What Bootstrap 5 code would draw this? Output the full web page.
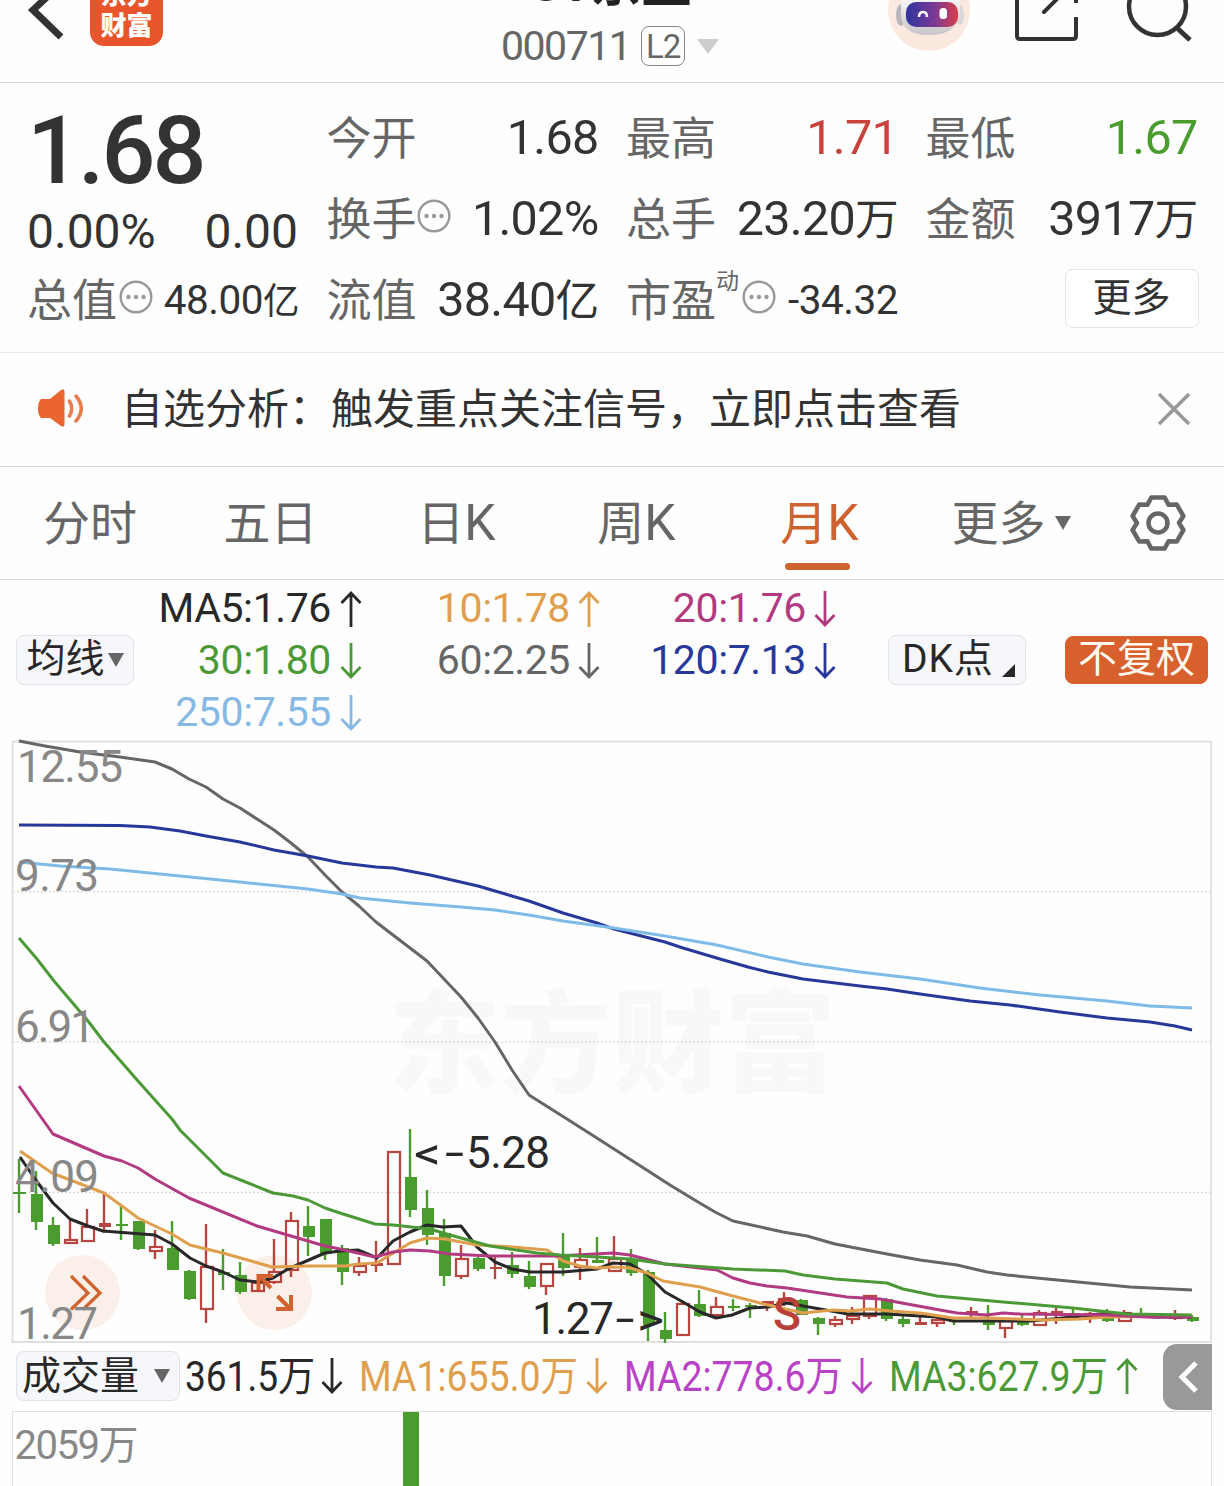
<!DOCTYPE html>
<html lang="zh-CN">
<head>
<meta charset="utf-8">
<meta name="viewport" content="width=device-width, initial-scale=1">
<title>ST京蓝 000711</title>
<link href="https://cdn.jsdelivr.net/npm/bootstrap@5.3.0/dist/css/bootstrap.min.css" rel="stylesheet">
<style>
body{font-family:Roboto,"Noto Sans CJK SC",sans-serif;background:#fefefe;color:#333;width:1224px;height:1486px;overflow:hidden;line-height:1}
svg{display:block;flex:none}
svg text{font-family:Roboto,"Noto Sans CJK SC",sans-serif}
#kline{overflow:visible}
.topbar{height:83px;border-bottom:1px solid #d6d6d6;overflow:hidden}
.applogo{width:73px;height:76px;margin:-30px 0 0 25px;border-radius:14px;background:#e8552b;color:#fff;font-weight:900;font-size:26px;line-height:31px;padding-top:10px;text-align:center}
.stockblock{margin-left:338px}
.stockname{font-size:50px;font-weight:700;color:#222;line-height:50px;margin-top:-41px;white-space:nowrap;text-align:center;width:200px}
.codeline{height:40px;margin-top:17px}
.stockcode{font-size:41px;letter-spacing:-1.5px;color:#666}
.lvtag{width:44px;height:40px;margin-left:11px;border:1.5px solid #888;border-radius:8px;font-size:33px;letter-spacing:-1px;color:#666}
.quote{height:270px;border-bottom:1px solid #e9e9e9;padding:15px 0 0 27px}
.quotegrid{display:grid;grid-template-columns:271px 271px 271px 271px;column-gap:28.5px;grid-template-rows:81px 81px 81px}
.pricecell{grid-row:span 2}
.bigprice{font-size:95px;font-weight:500;letter-spacing:-3px;line-height:95px;margin:5px 0 0 0}
.pct{font-size:48px;margin-top:9px;line-height:50px}
.qcell{height:81px}
.lab{font-size:45px;color:#666;padding-top:1px}
.val{font-size:48.5px;letter-spacing:-.7px;margin-right:-1px}
.vsm{font-size:40.5px;letter-spacing:-.5px}
.up{color:#c9423b}.down{color:#4a9c2e}
.cj{font-size:.9em}
.supmark{font-size:23px;color:#666;margin-bottom:38px}
.morebtn{width:134px;height:59px;border:1.5px solid #e3e4e6;border-radius:7px;font-size:39px;background:#fff;margin:-5px -2px 0 auto}
.notice{height:114px;border-bottom:1px solid #d8d8d8;font-size:42px;padding-left:37px}
.periods{display:grid;grid-template-columns:180px 181px 190px 170px 196px 188px 105px;height:113px;border-bottom:1px solid #d8d8d8;font-size:47px;color:#666}
.periods .kk{font-size:50px;margin-right:-1px}
.period{position:relative}
.period.on{color:#cf6330}
.period.on::after{content:"";position:absolute;left:50%;margin-left:-34px;top:96px;width:65px;height:7px;border-radius:4px;background:#cf6330}
.legend{height:161px;padding-left:16px}
.chip{height:50px;border:1.5px solid #e0e3e8;border-radius:8px;background:#f6f7fa;color:#282828;font-size:39px;margin-top:-2px}
.chip.solid{background:#d8602c;border-color:#d8602c;color:#fffaf0;height:48px}
.magrid{display:grid;grid-template-columns:229px 237px 236px;grid-auto-rows:52px;height:156px;font-size:41px;letter-spacing:-.4px}
.volrow{height:68px;padding-left:16px}
.foldtab{width:49px;height:66px;border-radius:14px 0 0 14px;background:#999}
.volpane{height:75px;margin:0 12px;border:1.5px solid #e0e0e0;border-bottom:0}
</style>
</head>
<body>
<svg width="0" height="0" class="position-absolute">
  <symbol id="aup" viewBox="0 0 22 36"><path d="M11 36V2M1.500 12 11 2l9.500 10" fill="none" stroke="currentColor" stroke-width="2.800"/></symbol>
  <symbol id="adn" viewBox="0 0 22 36"><path d="M11 0v34M1.500 24 11 34l9.500-10" fill="none" stroke="currentColor" stroke-width="2.800"/></symbol>
  <symbol id="dots" viewBox="0 0 34 34"><circle cx="17" cy="17" r="15.300" fill="none" stroke="#999" stroke-width="2.400"/><g fill="#999"><circle cx="9.500" cy="17" r="2.200"/><circle cx="17" cy="17" r="2.200"/><circle cx="24.500" cy="17" r="2.200"/></g></symbol>
</svg>

<header class="topbar d-flex align-items-start">
  <svg width="65" height="50" viewBox="0 0 65 50"><path d="M61-16 33 10l28 27" fill="none" stroke="#333" stroke-width="7"/></svg>
  <div class="applogo">东方<br>财富</div>
  <div class="stockblock d-flex flex-column align-items-center">
    <div class="stockname">ST京蓝</div>
    <div class="codeline d-flex align-items-center">
      <span class="stockcode">000711</span>
      <span class="lvtag d-flex align-items-center justify-content-center">L2</span>
      <svg width="24" height="16" viewBox="0 0 24 16" style="margin-left:11px"><path d="M1 1h22L12 16z" fill="#ccc"/></svg>
    </div>
  </div>
  <svg class="ms-auto" width="336" height="60" viewBox="888 0 336 60">
    <defs>
      <linearGradient id="face"><stop offset="0" stop-color="#2f35a0"/><stop offset=".55" stop-color="#7a3a94"/><stop offset="1" stop-color="#d8404a"/></linearGradient>
      <linearGradient id="helm" x2="0" y2="1"><stop offset="0" stop-color="#fff"/><stop offset="1" stop-color="#c9c5ca"/></linearGradient>
    </defs>
    <circle cx="929" cy="10" r="41" fill="#fbe9df"/>
    <ellipse cx="901" cy="15" rx="5" ry="11" fill="#b9b6bb"/><ellipse cx="960" cy="15" rx="4" ry="10" fill="#d9d6da"/>
    <path d="M901-8h59v22q-3 21-31 21t-28-21z" fill="url(#helm)"/>
    <rect x="906" y="2" width="52" height="25" rx="10" fill="url(#face)"/>
    <path d="M919 17q0-5 4-5t4 5" fill="none" stroke="#fff" stroke-width="2.500"/><rect x="939.500" y="8" width="7.500" height="11" rx="3.500" fill="#fff"/>
    <g fill="none" stroke="#333" stroke-width="4">
      <path d="M1017-6v42q0 3 3 3h53q3 0 3-3V17M1076-6v9"/><path d="m1044 12 22-22" stroke-linecap="round"/>
      <circle cx="1157.500" cy="6.500" r="28.500" stroke-width="4.500"/><path d="m1176 27 14 13" stroke-width="5"/>
    </g>
  </svg>
</header>

<section class="quote">
  <div class="quotegrid">
    <div class="pricecell"><div class="bigprice">1.68</div><div class="pct d-flex justify-content-between"><span>0.00%</span><span>0.00</span></div></div>
    <div class="qcell d-flex align-items-center justify-content-between"><span class="lab">今开</span><span class="val">1.68</span></div>
    <div class="qcell d-flex align-items-center justify-content-between"><span class="lab">最高</span><span class="val up">1.71</span></div>
    <div class="qcell d-flex align-items-center justify-content-between"><span class="lab">最低</span><span class="val down">1.67</span></div>
    <div class="qcell d-flex align-items-center"><span class="lab">换手</span><svg width="34" height="34" class="mb-2 ms-0"><use href="#dots"/></svg><span class="val ms-auto">1.02%</span></div>
    <div class="qcell d-flex align-items-center justify-content-between"><span class="lab">总手</span><span class="val">23.20<span class="cj">万</span></span></div>
    <div class="qcell d-flex align-items-center justify-content-between"><span class="lab">金额</span><span class="val">3917<span class="cj">万</span></span></div>
    <div class="qcell d-flex align-items-center"><span class="lab">总值</span><svg width="34" height="34" class="mb-2" style="margin-left:2px"><use href="#dots"/></svg><span class="val vsm ms-auto">48.00<span class="cj">亿</span></span></div>
    <div class="qcell d-flex align-items-center justify-content-between"><span class="lab">流值</span><span class="val">38.40<span class="cj">亿</span></span></div>
    <div class="qcell d-flex align-items-center"><span class="lab">市盈</span><span class="supmark">动</span><svg width="34" height="34" class="mb-2" style="margin-left:3px"><use href="#dots"/></svg><span class="val vsm ms-auto">-34.32</span></div>
    <div class="qcell d-flex align-items-center"><div class="morebtn d-flex align-items-center justify-content-center">更多</div></div>
  </div>
</section>

<section class="notice d-flex align-items-center">
  <svg width="48" height="38" viewBox="0 0 48 38" style="margin-bottom:3px"><path d="M4 10h9L24 1q3-2 3.500 1v34q-.5 3-3.500 1L13 29H4q-3-3-3-9.500T4 10z" fill="#ea6530"/><path d="M32.500 12q4.500 7.500 0 15M39 7q10.500 12.500 0 25" fill="none" stroke="#ea7c4c" stroke-width="3.500" stroke-linecap="round"/></svg>
  <span style="margin-left:36px">自选分析：触发重点关注信号，立即点击查看</span>
  <svg class="ms-auto" style="margin:0 33px 2px 0" width="34" height="34" viewBox="0 0 34 34"><path d="m2 2 30 30M32 2 2 32" stroke="#999" stroke-width="3.500"/></svg>
</section>

<nav class="periods">
  <div class="period d-flex align-items-center justify-content-center">分时</div>
  <div class="period d-flex align-items-center justify-content-center">五日</div>
  <div class="period d-flex align-items-center justify-content-center">日<span class="kk">K</span></div>
  <div class="period d-flex align-items-center justify-content-center">周<span class="kk">K</span></div>
  <div class="period on d-flex align-items-center justify-content-center">月<span class="kk">K</span></div>
  <div class="period d-flex align-items-center justify-content-center">更多<svg width="16" height="14" viewBox="0 0 16 14" style="margin-left:9px"><path d="M0 0h16L8 14z" fill="#666"/></svg></div>
  <div class="d-flex align-items-center justify-content-center"><svg width="60" height="60" viewBox="-30 -30 60 60"><g fill="none" stroke="#666" stroke-width="4.500" stroke-linejoin="round"><path d="M-6.700-25.500H6.700L10.500-18.200 18.700-18.600 25.400-7 21 0 25.400 7 18.700 18.600 10.500 18.200 6.700 25.500H-6.700L-10.500 18.200-18.700 18.600-25.400 7-21 0-25.400-7-18.700-18.600-10.500-18.200z"/><circle r="9.500"/></g></svg></div>
</nav>

<section class="legend d-flex align-items-center">
  <div class="chip d-flex align-items-center justify-content-center" style="width:118px">均线<svg width="16" height="14" viewBox="0 0 16 14" style="margin-left:3px"><path d="M0 0h16L8 14z" fill="#666"/></svg></div>
  <div class="magrid">
    <div class="d-flex align-items-center justify-content-end" style="color:#282828">MA5:1.76<svg width="22" height="36" style="margin:0 1px 0 9px"><use href="#aup"/></svg></div>
    <div class="d-flex align-items-center justify-content-end" style="color:#e09f4d">10:1.78<svg width="22" height="36" class="ms-2"><use href="#aup"/></svg></div>
    <div class="d-flex align-items-center justify-content-end" style="color:#b23a80">20:1.76<svg width="22" height="36" class="ms-2"><use href="#adn"/></svg></div>
    <div class="d-flex align-items-center justify-content-end" style="color:#4c9a37">30:1.80<svg width="22" height="36" style="margin:0 1px 0 9px"><use href="#adn"/></svg></div>
    <div class="d-flex align-items-center justify-content-end" style="color:#666">60:2.25<svg width="22" height="36" class="ms-2"><use href="#adn"/></svg></div>
    <div class="d-flex align-items-center justify-content-end" style="color:#27389a">120:7.13<svg width="22" height="36" class="ms-2"><use href="#adn"/></svg></div>
    <div class="d-flex align-items-center justify-content-end" style="color:#86b9e4">250:7.55<svg width="22" height="36" style="margin:0 1px 0 9px"><use href="#adn"/></svg></div>
  </div>
  <div class="chip d-flex align-items-center" style="width:138px;margin-left:52px;padding-left:13px"><span style="letter-spacing:.8px">DK点</span><svg width="13" height="13" viewBox="0 0 13 13" style="margin:22px 0 0 9px"><path d="M13 0v13H0z" fill="#282828"/></svg></div>
  <div class="chip solid d-flex align-items-center justify-content-center" style="width:143px;margin-left:39px">不复权</div>
</section>

<svg id="kline" width="1224" height="602" viewBox="0 741 1224 602">
  <text x="388" y="1084" textLength="448" lengthAdjust="spacingAndGlyphs" font-size="112" style="font-weight:900" fill="#f8f8f8">东方财富</text>
  <g stroke="#cfcfcf" stroke-width="1.300" stroke-dasharray="1.500 2.500"><path d="M13 891.500H1210M13 1042H1210M13 1192.500H1210"/></g>
  <path d="M12.500 741.500H1211V1342H12.500z" fill="none" stroke="#e0e0e0" stroke-width="1.800"/>
  <g fill="#fbf0e9"><circle cx="82.500" cy="1292.500" r="37.500"/><circle cx="274.500" cy="1292.500" r="37.500"/></g>
  <g id="candles"></g>
  <g fill="none" stroke-width="3" stroke-linejoin="round">
    <polyline stroke="#282828" points="20,1157 35,1179 53,1203 70,1219 88,1226 103,1231 155,1235 172,1244 190,1258 206,1266 223,1272 240,1280 258,1282 273,1278 288,1269 325,1253 340,1251 358,1250 377,1258 393,1241 410,1232 427,1225 443,1227 461,1226 477,1247 495,1262 512,1269 530,1272 563,1272 597,1269 613,1263 630,1264 647,1274 665,1292 683,1302 700,1312 716,1318 732,1315 750,1308 768,1307 787,1303 803,1306 820,1309 848,1314 887,1314 920,1316 937,1317 953,1321 1030,1321 1053,1319 1100,1314 1127,1314 1153,1317 1192,1317"/>
    <polyline stroke="#e09f4d" points="20,1151 52,1173 104,1193 122,1206 138,1218 172,1234 190,1245 206,1249 223,1253 272,1267 307,1266 345,1266 358,1264 377,1263 390,1255 410,1243 427,1238 445,1239 477,1245 513,1247 547,1250 563,1261 580,1266 597,1268 613,1267 630,1268 647,1273 663,1281 700,1287 733,1296 768,1305 803,1313 833,1310 850,1311 870,1309 890,1311 920,1313 953,1318 987,1318 1043,1320 1080,1319 1107,1317 1192,1316"/>
    <polyline stroke="#b23a80" points="19,1086 36,1110 53,1134 104,1156 122,1161 138,1168 155,1179 189,1198 257,1226 325,1246 340,1249 375,1257 393,1252 410,1250 430,1251 450,1254 490,1256 557,1256 613,1253 630,1255 665,1264 717,1270 733,1278 750,1283 767,1286 787,1288 847,1297 880,1299 940,1310 957,1313 987,1315 1003,1313 1020,1314 1107,1315 1147,1317 1192,1317"/>
    <polyline stroke="#4c9a37" points="19,938 37,959 54,981 71,1001 88,1021 104,1042 138,1081 172,1119 180,1130 223,1173 273,1193 293,1196 308,1200 325,1208 340,1213 375,1224 393,1225 430,1229 450,1235 490,1246 537,1253 560,1255 597,1257 630,1259 665,1264 733,1269 785,1271 803,1275 835,1279 887,1283 903,1289 937,1296 1003,1302 1073,1308 1127,1314 1192,1315"/>
    <polyline stroke="#666" points="19,741 45,746 80,752 120,757 155,762 172,769 189,779 206,787 223,799 240,808 257,819 274,830 291,843 308,857 325,875 342,892 359,906 376,922 393,935 410,948 427,961 444,979 461,997 478,1018 495,1042 512,1070 529,1095 548,1107 567,1119 600,1140 670,1185 693,1199 715,1212 733,1221 783,1232 807,1236 835,1244 887,1254 920,1260 957,1265 987,1272 1007,1275 1047,1279 1130,1287 1192,1290"/>
    <polyline stroke="#27389a" points="19,825 120,825.500 150,827 180,831 206,836 240,842 274,850 308,856 342,863 376,867 393,868 430,875 478,886 529,901 563,913 597,923 614,929 665,942 683,948 720,959 748,967 768,972 803,979 860,986 887,989 920,994 970,1001 1010,1005 1060,1012 1107,1018 1150,1022 1175,1026 1192,1030"/>
    <polyline stroke="#7fbbe8" points="19,862 60,866 110,869 160,874 240,882 308,889 342,894 360,898 410,903 461,907 495,910 529,915 563,921 614,928 665,936 717,945 768,957 803,964 860,972 920,979 980,988 1040,995 1107,1001 1150,1006 1192,1008"/>
  </g>
  <g fill="none" stroke="#d2622f" stroke-width="3.200"><path d="m71 1276 17 17-17 16.500M83 1276l17 17-17 16.500"/><path stroke-width="4" d="M258.500 1290v-14H273M259 1276l12 12M277.500 1296l13 13M276 1309h15v-14"/></g>
  <g fill="#888" font-size="44">
    <text x="17" y="782" textLength="106">12.55</text><text x="15" y="891" textLength="84">9.73</text><text x="15" y="1042" textLength="80">6.91</text><text x="15" y="1192" textLength="84">4.09</text><text x="17" y="1339" textLength="81">1.27</text>
  </g>
  <g fill="#282828" font-size="44">
    <text x="414" y="1169" textLength="27" lengthAdjust="spacingAndGlyphs">&lt;</text><text x="445" y="1168" textLength="19" lengthAdjust="spacingAndGlyphs">-</text><text x="466" y="1168" textLength="84">5.28</text>
    <text x="532" y="1334" textLength="82">1.27</text><text x="615.500" y="1334" textLength="19" lengthAdjust="spacingAndGlyphs">-</text><text x="637" y="1335" textLength="27" lengthAdjust="spacingAndGlyphs">&gt;</text>
  </g>
  <text x="773" y="1330" font-size="46" textLength="28" lengthAdjust="spacingAndGlyphs" fill="#b9403a" style="font-weight:500">S</text>
</svg>

<section class="volrow d-flex align-items-center">
  <div class="chip d-flex align-items-center justify-content-between" style="width:164px;padding:0 9px 0 5px">成交量<svg width="16" height="14" viewBox="0 0 16 14"><path d="M0 0h16L8 14z" fill="#666"/></svg></div>
  <div class="d-flex" style="margin:-2px 0 0 5px;gap:16px">
    <svg width="160" height="44" viewBox="0 0 160 44" fill="#282828" color="#282828"><text x="0" y="37" font-size="42" textLength="130" lengthAdjust="spacingAndGlyphs">361.5万</text><use href="#adn" x="136" y="4" width="22" height="36"/></svg>
    <svg width="249" height="44" viewBox="0 0 249 44" fill="#e09f4d" color="#e09f4d"><text x="-2" y="37" font-size="42" textLength="219" lengthAdjust="spacingAndGlyphs">MA1:655.0万</text><use href="#adn" x="225" y="4" width="22" height="36"/></svg>
    <svg width="249" height="44" viewBox="0 0 249 44" fill="#b943c6" color="#b943c6"><text x="-2" y="37" font-size="42" textLength="219" lengthAdjust="spacingAndGlyphs">MA2:778.6万</text><use href="#adn" x="225" y="4" width="22" height="36"/></svg>
    <svg width="249" height="44" viewBox="0 0 249 44" fill="#4c9a37" color="#4c9a37"><text x="-2" y="37" font-size="42" textLength="219" lengthAdjust="spacingAndGlyphs">MA3:627.9万</text><use href="#aup" x="225" y="4" width="22" height="36"/></svg>
  </div>
  <div class="foldtab d-flex align-items-center justify-content-center ms-auto" style="margin-right:12px"><svg width="20" height="34" viewBox="0 0 20 34"><path d="M18 3 4 17l14 14" fill="none" stroke="#fff" stroke-width="5"/></svg></div>
</section>
<section class="volpane">
  <svg width="1197" height="75" viewBox="13.500 1411.500 1197 75"><rect x="403.500" y="1411" width="16" height="76" fill="#4a9c2e"/><text x="15" y="1458" font-size="40" fill="#888" textLength="124">2059万</text></svg>
</section>

<script>
// Monthly candles, one per 17px: [wick top, body top, body bottom, wick bottom, rising]
const bars=[[1159,1192,1194,1213,0],[1171,1194,1222,1230,0],[1217,1225,1244,1246,0],[1219,1239,1244,1244,1],[1209,1226,1242,1242,1],[1192,1223,1227,1233,1],[1206,1224,1226,1240,0],[1221,1221,1249,1250,0],[1230,1246,1252,1259,1],[1221,1248,1270,1270,0],[1270,1271,1299,1300,0],[1224,1266,1310,1323,1],[1249,1272,1275,1290,0],[1262,1275,1292,1294,0],[1280,1282,1292,1292,1],[1239,1271,1283,1284,1],[1212,1220,1271,1277,1],[1206,1226,1237,1256,0],[1219,1219,1254,1260,0],[1245,1248,1272,1285,0],[1257,1265,1273,1276,1],[1241,1263,1266,1272,1],[1151,1151,1265,1265,1],[1129,1177,1210,1217,0],[1190,1208,1235,1245,0],[1219,1233,1276,1286,0],[1245,1258,1277,1279,1],[1257,1258,1269,1271,0],[1255,1267,1269,1279,1],[1252,1265,1274,1278,0],[1261,1276,1287,1289,0],[1263,1263,1287,1295,1],[1233,1255,1268,1276,0],[1248,1259,1268,1280,1],[1237,1260,1263,1263,0],[1236,1258,1272,1272,1],[1249,1259,1273,1276,0],[1270,1272,1325,1341,0],[1312,1330,1339,1343,0],[1301,1303,1336,1336,1],[1290,1304,1316,1317,0],[1297,1306,1316,1317,1],[1299,1306,1308,1311,0],[1303,1305,1307,1318,0],[1301,1301,1304,1311,1],[1292,1298,1304,1306,1],[1299,1300,1315,1315,0],[1317,1318,1324,1335,0],[1316,1319,1325,1327,1],[1307,1315,1320,1324,1],[1295,1295,1317,1319,1],[1298,1299,1319,1321,0],[1315,1319,1324,1327,0],[1315,1322,1325,1325,1],[1318,1319,1324,1327,1],[1318,1320,1322,1325,0],[1307,1311,1315,1317,1],[1305,1320,1325,1330,0],[1318,1320,1329,1338,1],[1315,1321,1325,1326,0],[1310,1312,1326,1326,1],[1308,1311,1315,1324,1],[1309,1313,1315,1316,0],[1312,1313,1318,1323,1],[1309,1312,1321,1322,0],[1310,1312,1322,1322,1],[1308,1313,1315,1316,0],[1314,1316,1318,1319,0],[1310,1314,1319,1320,1],[1315,1317,1321,1322,0]];
let out='';
bars.forEach(([wt,bt,bb,wb,rise],i)=>{
  const x=19+17*i,c=rise?'#b9453f':'#4a9c2e',h=bb-bt;
  if(rise&&h>4){
    out+=`<path d="M${x} ${wt}V${bt}M${x} ${bb}V${wb}" stroke="${c}" stroke-width="2.400"/><rect x="${x-5}" y="${bt+1}" width="12" height="${h-2}" fill="none" stroke="${c}" stroke-width="2.200"/>`;
  }else{
    const l=i?x-5:13;
    out+=`<path d="M${x} ${wt}V${wb}" stroke="${c}" stroke-width="2.400"/><rect x="${l}" y="${bt}" width="${x+7-l}" height="${h}" fill="${c}"/>`;
  }
});
document.getElementById('candles').innerHTML=out;
</script>
<script src="https://cdn.jsdelivr.net/npm/bootstrap@5.3.0/dist/js/bootstrap.bundle.min.js"></script>
</body>
</html>
